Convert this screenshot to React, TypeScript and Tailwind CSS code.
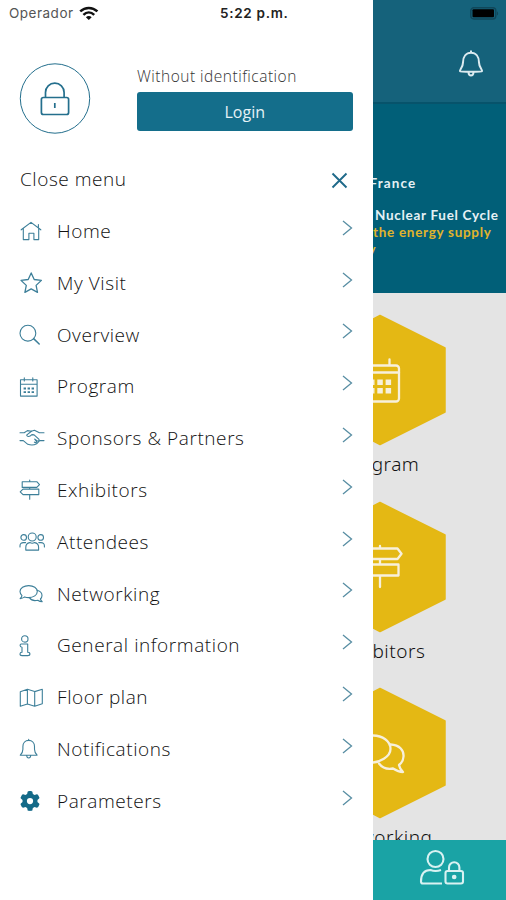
import React from 'react';
import { FaGear } from 'react-icons/fa6';

type IconProps = {
  children: React.ReactNode;
};

function MenuIcon({ children }: IconProps) {
  return (
    <svg
      width="26"
      height="24"
      viewBox="0 0 26 24"
      fill="none"
      stroke="#3d7f99"
      strokeWidth="1.1"
      strokeLinecap="round"
      strokeLinejoin="round"
      className="flex-none"
    >
      {children}
    </svg>
  );
}

const menu = [
  {
    name: 'Home',
    icon: (
      <MenuIcon>
        <path d="M2.2 10.8 12 3.4l9.8 7.4M19.4 8.6V5.5M4.3 9.6v11h5.6v-6.3h5v6.3h4.8v-11" />
      </MenuIcon>
    ),
  },
  {
    name: 'My Visit',
    icon: (
      <MenuIcon>
        <path d="m12.2 1.9 3 6.6 7.2.9-5.3 5 1.4 7-6.3-3.5-6.3 3.5 1.4-7-5.3-5 7.2-.9z" strokeWidth="1.3" />
      </MenuIcon>
    ),
  },
  {
    name: 'Overview',
    icon: (
      <MenuIcon>
        <circle cx="8.9" cy="10.2" r="7.9" />
        <path d="m14.6 15.6 5.6 5.4" strokeWidth="1.5" />
      </MenuIcon>
    ),
  },
  {
    name: 'Program',
    icon: (
      <MenuIcon>
        <path d="M1.5 4.7h16.6v16.4H1.5zM1.5 9.3h16.6M5.3 2.9v3M13.8 2.9v3" />
        <path d="M4.6 13.5h10.4M4.6 17.1h10.4" strokeWidth="1.9" strokeDasharray="2.4 1.6" strokeLinecap="butt" />
      </MenuIcon>
    ),
  },
  {
    name: 'Sponsors & Partners',
    icon: (
      <MenuIcon>
        <path d="M1 6.8h4.2l3.2-2.2 4 .6 3-.9 5 2.5H25M1 14.6h3.3l4.5 3.7c2.2.8 6.5.8 8.8-.5l3-3.2H25" />
        <path d="M12.4 5.2 7.6 9.1c.8 2 2.9 1.7 5.3-.5l2.2.3 4.7 4.3c1 1.3-.5 2.5-1.8 1.6l-2.3-1.7 1.7 2.2c.5 1.4-1.2 1.7-2 .9" />
      </MenuIcon>
    ),
  },
  {
    name: 'Exhibitors',
    icon: (
      <MenuIcon>
        <path d="M10.7 2v1.6M10.7 9.5v1.6M10.7 16.6v4.7M3.2 3.7h14.6l2.7 2.9-2.7 2.8H3.2zM19.8 11.1H4l-2.8 2.8L4 16.6h15.8z" />
      </MenuIcon>
    ),
  },
  {
    name: 'Attendees',
    icon: (
      <MenuIcon>
        <circle cx="13.2" cy="7" r="4" />
        <circle cx="4.7" cy="7.4" r="2.8" />
        <circle cx="21.7" cy="7.4" r="2.8" />
        <path d="M6.8 20.1v-2.8c0-2.7 1.3-4.3 4-4.7 1.4.7 3.4.7 4.8 0 2.7.4 4 2 4 4.7v2.8zM1 17v-1.2c0-2 1.4-3.2 3.4-3.2h2.2M25.4 17v-1.2c0-2-1.4-3.2-3.4-3.2h-2.2" />
      </MenuIcon>
    ),
  },
  {
    name: 'Networking',
    icon: (
      <MenuIcon>
        <path d="M3 13.6C1.8 12.5 1 11.2 1 9.6c0-3.4 3.9-6 8.7-6s8.6 2.6 8.6 6-3.8 6-8.6 6c-1.4 0-2.8-.2-4-.7-1.4 1-2.8 1.7-4.6 1.7 1-.8 1.6-1.8 1.9-3z" />
        <path d="M18.2 8.2c2.8.8 4.8 2.8 4.8 5.2 0 1.4-.6 2.6-1.6 3.6.3 1 .9 1.9 1.8 2.7-1.8 0-3.2-.6-4.5-1.5-3.5.9-6.7-.2-8.3-2.6" />
      </MenuIcon>
    ),
  },
  {
    name: 'General information',
    icon: (
      <MenuIcon>
        <circle cx="5.8" cy="4.9" r="3.2" />
        <path d="M2.2 10h6.5v8.2c1.400 0 2.200.5 2.200 1.700s-.8 1.700-2.200 1.700H3.100c-1.300 0-2.100-.5-2.100-1.700s.8-1.700 2-1.700v-5c-1.200 0-1.900-.4-1.900-1.600 0-1 .5-1.600 1.100-1.600z" />
      </MenuIcon>
    ),
  },
  {
    name: 'Floor plan',
    icon: (
      <MenuIcon>
        <path d="M1.3 5.8 8.4 3.3l7.3 2.3 7.6-2.3v14.5l-7.6 2.5-7.300-2.400-7.100 2.400zM8.4 3.3v14.6M15.7 5.6v14.7" />
      </MenuIcon>
    ),
  },
  {
    name: 'Notifications',
    icon: (
      <MenuIcon>
        <path d="M9.7 2.2v1.2M1.3 18.200c1.600-1.700 2.600-3.300 2.600-6V9.500c0-3.500 2.400-6.100 5.800-6.100s5.800 2.600 5.800 6.100v2.700c0 2.700 1 4.300 2.600 6zM7.700 18.500c.2 3.300 3.800 3.300 4 0" />
      </MenuIcon>
    ),
  },
  {
    name: 'Parameters',
    icon: (
      <span className="w-[26px] pl-[1px] flex-none">
        <FaGear size={20} color="#146a88" />
      </span>
    ),
  },
];

function StatusBar() {
  return (
    <div className="flex items-center h-[27px] pl-[9px] font-[Inter,sans-serif] text-[13.5px]">
      <span className="text-[#555] w-[65px] tracking-[0.5px]">Operador</span>
      <svg width="20" height="15" viewBox="0 0 20 15" fill="none" stroke="#111" strokeWidth="2.5" className="ml-[5px]">
        <path d="M1.2 5.4c5-4.7 12.2-4.7 17.2 0M4.4 8.8c3.2-3 7.6-3 10.8 0" />
        <path d="m6.9 11.2 2.9 2.9 2.9-2.9c-1.7-1.5-4.1-1.5-5.8 0z" fill="#111" stroke="none" />
      </svg>
      <span className="ml-[121px] font-semibold text-[#222] tracking-[0.7px] whitespace-nowrap">5:22 p.m.</span>
    </div>
  );
}

function Drawer() {
  return (
    <div className="w-[372.5px] h-full flex-none bg-white font-['Open_Sans',sans-serif]">
      <StatusBar />
      <div className="flex pl-[19px] pt-[36px] h-[125.3px]">
        <svg width="72" height="72" viewBox="0 0 72 72" fill="none" stroke="#246f8d">
          <circle cx="36" cy="35.5" r="34.7" />
          <rect x="22.4" y="34.5" width="27.2" height="17" rx="2" strokeWidth="1.7" />
          <path d="M26.5 34v-4.500a9.300 9.300 0 0 1 18.600 0V34" strokeWidth="1.7" />
          <path d="M35.8 40v5" strokeWidth="1.7" />
        </svg>
        <div className="ml-[46px] w-[216px]">
          <p className="text-[15.5px] leading-[20px] pt-[3px] font-light text-[#333] tracking-[0.5px] whitespace-nowrap">
            Without identification
          </p>
          <button className="mt-[6px] w-[215.5px] h-[38.5px] rounded-[3px] bg-[#146e8b] pt-[1px] text-[#e6f2f6] text-[16px] block">
            Login
          </button>
        </div>
      </div>
      <div className="flex items-center justify-between h-[53px] pl-[20px] pr-[25px]">
        <span className="text-[19px] font-light text-[#111] tracking-[0.55px]">Close menu</span>
        <svg width="17" height="17" viewBox="0 0 17 17" stroke="#1f6a8a" strokeWidth="1.9" className="mt-[4px]">
          <path d="m1.5 1.5 14 14M15.5 1.5l-14 14" />
        </svg>
      </div>
      <ul>
        {menu.map((item) => (
          <li key={item.name} className="flex items-center h-[51.82px] pl-[19px] pr-[20px]">
            {item.icon}
            <span className="ml-[12px] flex-1 text-[19px] font-light text-[#111] tracking-[0.58px] whitespace-nowrap">
              {item.name}
            </span>
            <svg width="11" height="16" viewBox="0 0 11 16" fill="none" stroke="#588ea3" strokeWidth="1.3" className="mb-[7px]">
              <path d="m1 1 8.500 7L1 15" />
            </svg>
          </li>
        ))}
      </ul>
    </div>
  );
}

type TileProps = {
  name: string;
  children: React.ReactNode;
};

// hexagon tile, icon drawn from its centre
function Tile({ name, children }: TileProps) {
  return (
    <div className="h-[186.5px] flex flex-col items-center">
      <svg width="132" height="132" viewBox="-66 -66 132 132" fill="none" stroke="#f7f0dc" strokeWidth="2.3" strokeLinejoin="round" strokeLinecap="round" className="flex-none">
        <path d="M0-64.500 65-32v64L0 64.500-65 32v-64z" fill="#e4b814" stroke="#e4b814" strokeWidth="1.5" />
        {children}
      </svg>
      <span className="mt-[5px] text-[19px] leading-[26px] font-light text-[#111] tracking-[0.5px]">{name}</span>
    </div>
  );
}

function Screen() {
  return (
    <div className="flex-1 h-full overflow-hidden flex flex-col bg-[#e4e4e4]">
      <div className="h-[104px] flex-none bg-[#15627b] border-b-2 border-[#07536b]">
        <div className="flex justify-end pt-[7px] pr-[7px] h-[50px]">
          <svg width="29" height="13" viewBox="0 0 29 13">
            <rect x=".8" y=".8" width="25" height="11.2" rx="3" fill="none" stroke="#10475a" strokeWidth="1.4" />
            <rect x="2.5" y="2.3" width="21.5" height="8" rx="1" fill="#000" />
            <path d="M27 4.200c1.500.8 1.500 3.600 0 4.400z" fill="#10475a" />
          </svg>
        </div>
        <svg width="26" height="28" viewBox="0 0 26 28" fill="none" stroke="#dcebf0" strokeWidth="2" strokeLinejoin="round" className="ml-[85.5px]">
          <path d="M13 .6v2M2 21.200c-.8-1.200 3-3.500 3-8.700 0-6 3.200-9.800 8-9.800s8 3.800 8 9.800c0 5.200 3.800 7.500 3 8.700-.4.800-21.600.8-22 0zM10.500 22.500c.3 4 4.700 4 5 0" />
        </svg>
      </div>
      <div className="h-[188.5px] flex-none bg-[#015f78] pt-[71px] font-[Lato,sans-serif] font-bold text-[13.5px] leading-[17px] text-[#e5f1f5] whitespace-nowrap">
        <p className="-ml-[3px] tracking-[1.1px]">France</p>
        <p className="mt-[15px] ml-[2.5px] tracking-[0.7px]">Nuclear Fuel Cycle</p>
        <p className="ml-[.5px] text-[#e0b42c] tracking-[0.7px]">the energy supply</p>
        <p className="-ml-[4px] text-[#e0b42c]">y</p>
      </div>
      <div className="flex-1 min-h-0 overflow-hidden w-[132px] -ml-[58.5px] pt-[21.5px]">
        <Tile name="Program">
          <rect x="-19" y="-14.5" width="38" height="36" rx="3" />
          <path d="M-19-7.500h38M-9.500-20.500v5M9.500-20.500v5" />
          <path d="M-11 2.300h22.200M-11 10.700h22.200" strokeWidth="5.5" strokeDasharray="5.5 2.8" strokeLinecap="butt" />
        </Tile>
        <Tile name="Exhibitors">
          <path d="M0-21v2M0-8v5M0 8.500v11.500M-18-18.500h35.500l4 5.300-4 5.200H-18zM18.500-2.500H-17l-4.500 5.500 4.500 5.500h35.500z" />
        </Tile>
        <Tile name="Networking">
          <path d="M-21.500 5.500C-23.500 3-25-.5-25-4c0-7.500 7.500-13.500 17.500-13.500S10.500-12 10.500-4-1 9.500-8 9.500c-3 0-6-.5-8.500-1.500-2.500 2-5.500 3.500-9 3.500 2-1.500 3.500-3.500 4-6z" />
          <path d="M10.500-8.500c9.500.5 13.500 6 13 12-.2 3.500-2 6.500-4.500 8.500.5 3 2 5 4 7-4 0-7-1.500-10-3.500-5.500 1-11-1-14-5" />
        </Tile>
      </div>
      <div className="h-[60.5px] flex-none bg-[#1aa3a5] pt-[8px] pl-[46px]">
        <svg width="46" height="38" viewBox="0 0 46 38" fill="none" stroke="#d9f2f2" strokeWidth="2.1" strokeLinejoin="round">
          <circle cx="16.5" cy="11" r="8" />
          <path d="M23 35.500H4c-1.500 0-2-.7-2-2 0-7.500 3.500-11.500 9.500-11.500 3 1.200 7 1.200 10.500 0" />
          <rect x="26.5" y="23" width="17.5" height="12.5" rx="2" />
          <path d="M30 23v-3.500a5.200 5.200 0 0 1 10.400 0V23" />
          <circle cx="35.2" cy="29" r="1.3" fill="#fff" />
        </svg>
      </div>
    </div>
  );
}

export default function App() {
  return (
    <div className="flex w-[506px] h-[900px] overflow-hidden bg-white">
      <Drawer />
      <Screen />
    </div>
  );
}
